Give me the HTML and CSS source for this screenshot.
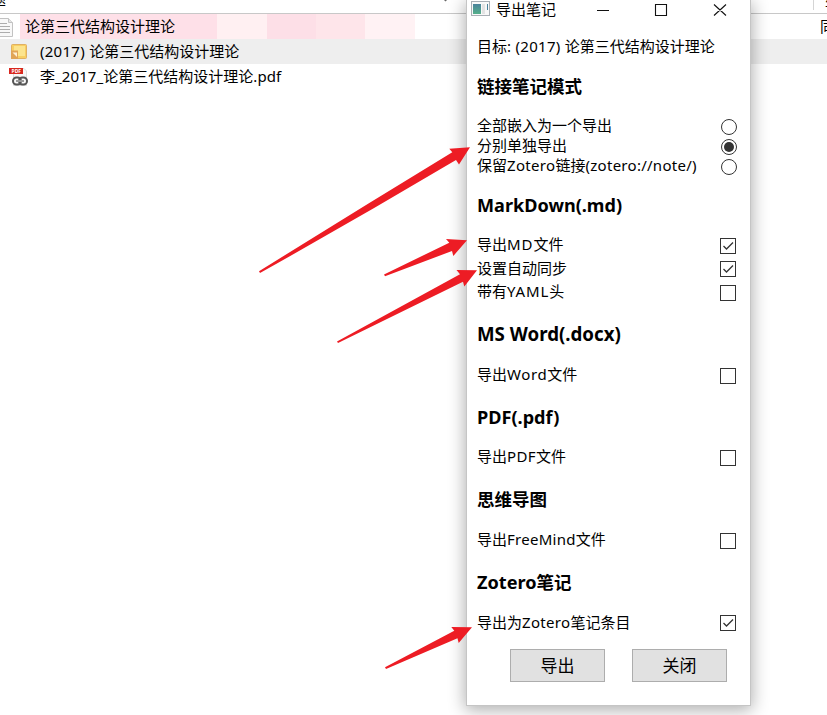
FILE: index.html
```html
<!DOCTYPE html>
<html lang="zh-CN">
<head>
<meta charset="utf-8">
<title>导出笔记</title>
<link rel="stylesheet" href="styles.css">
</head>
<body>
<main class="library">
  <header class="columns">
    <span class="col-title">题</span>
    <svg class="col-sort" width="5" height="3" viewBox="0 0 5 3"><path d="M0 0H5L2.5 2.5Z" fill="#666"/></svg>
    <span class="col-divider"></span>
    <span class="col-next">年</span>
  </header>
  <div class="item item-parent">
    <svg class="doc-icon" width="13" height="20" viewBox="0 0 13 20"><path d="M-3 .5H8.5L12.5 4.5V18.5H-3Z" fill="#f8f8f8" stroke="#c2c2c2"/><path d="M8.500 .5V4.500H12.500" fill="#e5e5e5" stroke="#c2c2c2"/><path d="M0 5.500H7M0 8.500H10M0 11.500H10M0 14.500H10" stroke="#adadad"/></svg>
    <div class="heat"><i class="h1"></i><i class="h2"></i><i class="h3"></i><i class="h4"></i><i class="h5"></i></div>
    <span class="name">论第三代结构设计理论</span>
    <span class="extra">同</span>
  </div>
  <div class="item item-child selected">
    <svg class="icon" width="20" height="20" viewBox="0 0 20 20"><rect x="2.500" y="2.500" width="15" height="14" rx="1" fill="#f8cf63" stroke="#e0b062"/><rect x="5" y="4" width="11" height="10" fill="#fce48e"/><path d="M2 8.500H9V17H2Z" fill="#e0a458"/><path d="M3.500 10.500H8V15Z" fill="#fff0d4"/></svg>
    <span class="name"><span class="num">(2017) </span>论第三代结构设计理论</span>
  </div>
  <div class="item item-child">
    <svg class="icon" width="20" height="20" viewBox="0 0 20 20"><path d="M4.500 1.500H15L17.500 4V18.500H4.500Z" fill="#f7f7f7" stroke="#ddd"/><rect x="0" y="1" width="14" height="6" fill="#d8281f"/><text class="pdf-tag" x="2.500" y="6">PDF</text><g fill="none" stroke="#555" stroke-width="2"><rect x="4" y="10.500" width="8" height="7" rx="3.500"/><rect x="10" y="10.500" width="8" height="7" rx="3.500"/></g><path d="M7 14H15" stroke="#999" stroke-width="2"/></svg>
    <span class="name">李<span class="file">_2017_</span>论第三代结构设计理论<span class="file">.pdf</span></span>
  </div>
</main>

<section class="dialog">
  <div class="titlebar">
    <svg class="app-icon" width="19" height="16" viewBox="0 0 19 16"><defs><linearGradient id="g" x2="0" y2="1"><stop stop-color="#4a829b"/><stop offset="1" stop-color="#55b08a"/></linearGradient></defs><rect x=".5" y=".5" width="18" height="14" fill="#f8f8f8" stroke="#a9afb5"/><rect x="2" y="3" width="8" height="10" fill="url(#g)"/><rect x="11" y="3" width="3" height="10" fill="#e3e3e3"/><path d="M16.500 3V9" stroke="#4a829b"/></svg>
    <span class="title">导出笔记</span>
    <svg class="win-controls" width="130" height="14" viewBox="0 0 130 14"><path d="M0 7.500H12M58.500 1.500H69.500V12.500H58.500ZM117 1.500L129 12.500M129 1.500L117 12.500" fill="none" stroke="#111" stroke-width="1.100"/></svg>
  </div>
  <p class="target">目标<span class="lt">: (2017) </span>论第三代结构设计理论</p>
  <h2 class="first">链接笔记模式</h2>
  <div class="radios">
    <label class="row"><span>全部嵌入为一个导出</span><i class="radio"></i></label>
    <label class="row"><span>分别单独导出</span><i class="radio on"></i></label>
    <label class="row"><span>保留<span class="l1">Zotero</span>链接<span class="l2">(zotero://note/)</span></span><i class="radio"></i></label>
  </div>
  <h2 class="md"><span class="hm">MarkDown(.md)</span></h2>
  <label class="row check"><span>导出<span class="l3">MD</span>文件</span><i class="box"><svg viewBox="0 0 14 14"><path d="M2.500 7L5.500 10L12 3.500"/></svg></i></label>
  <label class="row check mid"><span>设置自动同步</span><i class="box"><svg viewBox="0 0 14 14"><path d="M2.500 7L5.500 10L12 3.500"/></svg></i></label>
  <label class="row check"><span>带有<span class="l3">YAML</span>头</span><i class="box"></i></label>
  <h2 class="word"><span class="hw">MS Word(.docx)</span></h2>
  <label class="row check"><span>导出<span class="l5">Word</span>文件</span><i class="box"></i></label>
  <h2><span class="hp">PDF(.pdf)</span></h2>
  <label class="row check"><span>导出<span class="l6">PDF</span>文件</span><i class="box"></i></label>
  <h2 class="mind">思维导图</h2>
  <label class="row check"><span>导出<span class="l7">FreeMind</span>文件</span><i class="box"></i></label>
  <h2 class="mind"><span class="hz">Zotero</span>笔记</h2>
  <label class="row check last"><span>导出为<span class="l1">Zotero</span>笔记条目</span><i class="box"><svg viewBox="0 0 14 14"><path d="M2.500 7L5.500 10L12 3.500"/></svg></i></label>
  <div class="actions"><button>导出</button><button>关闭</button></div>
</section>

<svg class="arrows" width="827" height="715" viewBox="0 0 827 715">
  <path d="M259 271.300Q355 211.500 452.300 152.300L449.300 148.700L470 147.300L459 164.500L456 160Q360 217 260 273Z"/>
  <path d="M384 274.500L449.300 242.700L446 239L467 240.300L453.300 256L452 251L385 276.200Z"/>
  <path d="M337 341.500L460 274.300L456.500 270L477 270.300L464.300 286.500L463 281.700L338 343Z"/>
  <path d="M385 667.300L454.300 630.700L451.300 627L472 627.300L458.700 643L457.500 638.300L386 669Z"/>
</svg>
</body>
</html>
```

FILE: styles.css
```css
* { box-sizing: border-box; }
body {
  margin: 0;
  width: 827px;
  height: 715px;
  overflow: hidden;
  position: relative;
  background: #fff;
  color: #000;
  font: 15px/20px "Noto Sans", "Noto Sans CJK SC", sans-serif;
}
i { font-style: normal; }

/* item list */
.columns {
  height: 14px;
  display: flex;
  align-items: flex-start;
  overflow: hidden;
  border-bottom: 1px solid #c8c8c8;
}
.columns > *, .item > * { flex: none; }
.col-title { width: 15px; margin: -12px 0 0 -9px; }
.col-sort { margin-left: 437px; margin-top: -1px; }
.col-divider { width: 1px; height: 10px; margin-left: 365px; background: #d5d5d5; }
.col-next { margin: -7px 0 0 11px; }
.item { height: 25px; display: flex; align-items: center; position: relative; white-space: nowrap; overflow: hidden; }
.item .name, .item .extra { position: relative; line-height: 25px; }
.item-parent .name { margin-left: 12px; }
.item-parent .extra { margin-left: 645px; }
.doc-icon { margin-top: 2px; }
.heat { position: absolute; inset: 0 auto 0 20px; display: flex; }
.h1 { width: 197px; background: #fee0e8; }
.h2 { width: 50px; background: #fff0f2; }
.h3 { width: 49px; background: #fddfe7; }
.h4 { width: 49px; background: #fee5ea; }
.h5 { width: 50px; background: #fff2f4; }
.item-child { padding-left: 9px; }
.item-child .name { margin-left: 11px; }
.selected { background: #eee; }
.pdf-tag { font: bold 5px "Open Sans", sans-serif; fill: #fff; }

/* tracking of Latin runs */
.num { letter-spacing: .27px; }
.file { letter-spacing: .1px; }
.lt { letter-spacing: .3px; }
.l1 { letter-spacing: .33px; }
.l2 { letter-spacing: .27px; }
.l3 { letter-spacing: .9px; }
.l5 { letter-spacing: .6px; }
.l6 { letter-spacing: .4px; }
.l7 { letter-spacing: .27px; }
.hm, .hp, .hz { font-size: 18.1px; }
.hw { font-size: 18.7px; }

/* export dialog */
.dialog {
  position: absolute;
  left: 466px;
  top: 0;
  width: 285px;
  height: 706px;
  background: #fff;
  border: solid #c5c5c5;
  border-width: 0 1px 1px;
  box-shadow: 0 3px 16px 1px rgba(0, 0, 0, .32);
  padding: 0 12px 0 10px;
}
.titlebar { height: 20px; display: flex; align-items: center; margin-left: -6px; }
.app-icon { flex: none; margin-top: -2px; }
.title { margin: -2px 0 0 6px; }
.win-controls { margin-left: 41px; flex: none; }
.target { margin: 16px 0 0; height: 20px; white-space: nowrap; }
h2 { margin: 18px 0; height: 22px; font-size: 17.5px; line-height: 22px; font-weight: 700; white-space: nowrap; }
.first { margin-top: 19px; margin-bottom: 20px; }
.md { margin-top: 17px; }
.word { margin-top: 18px; margin-bottom: 19px; }
.mind { margin-top: 18px; margin-bottom: 19px; }
.row { display: flex; justify-content: space-between; align-items: center; height: 20px; white-space: nowrap; }
.row > span { margin-top: -4px; }
.check { height: 24px; padding-right: 2px; }
.check.mid { height: 23px; }
.check.mid > span { margin-top: -3px; }
.check.mid .box { margin-top: -1px; }
.check.last .box { margin-top: -2px; }
.radio { width: 16px; height: 16px; margin-right: 1px; border: 1px solid #333; border-radius: 50%; display: grid; place-items: center; }
.radio.on::after { content: ""; width: 10px; height: 10px; border-radius: 50%; background: #333; }
.box { width: 16px; height: 16px; border: 1px solid #333; flex: none; }
.box svg { display: block; width: 14px; height: 14px; fill: none; stroke: #333; stroke-width: 1.3; }
.actions { display: flex; gap: 27px; margin: 13px 0 0 33px; }
button { width: 95px; height: 33px; padding: 0 0 2px; border: 1px solid #adadad; background: #e1e1e1; color: #000; font: 17px/20px "Noto Sans CJK SC", sans-serif; }

.arrows { position: absolute; inset: 0; fill: #ed1c24; pointer-events: none; }
```
